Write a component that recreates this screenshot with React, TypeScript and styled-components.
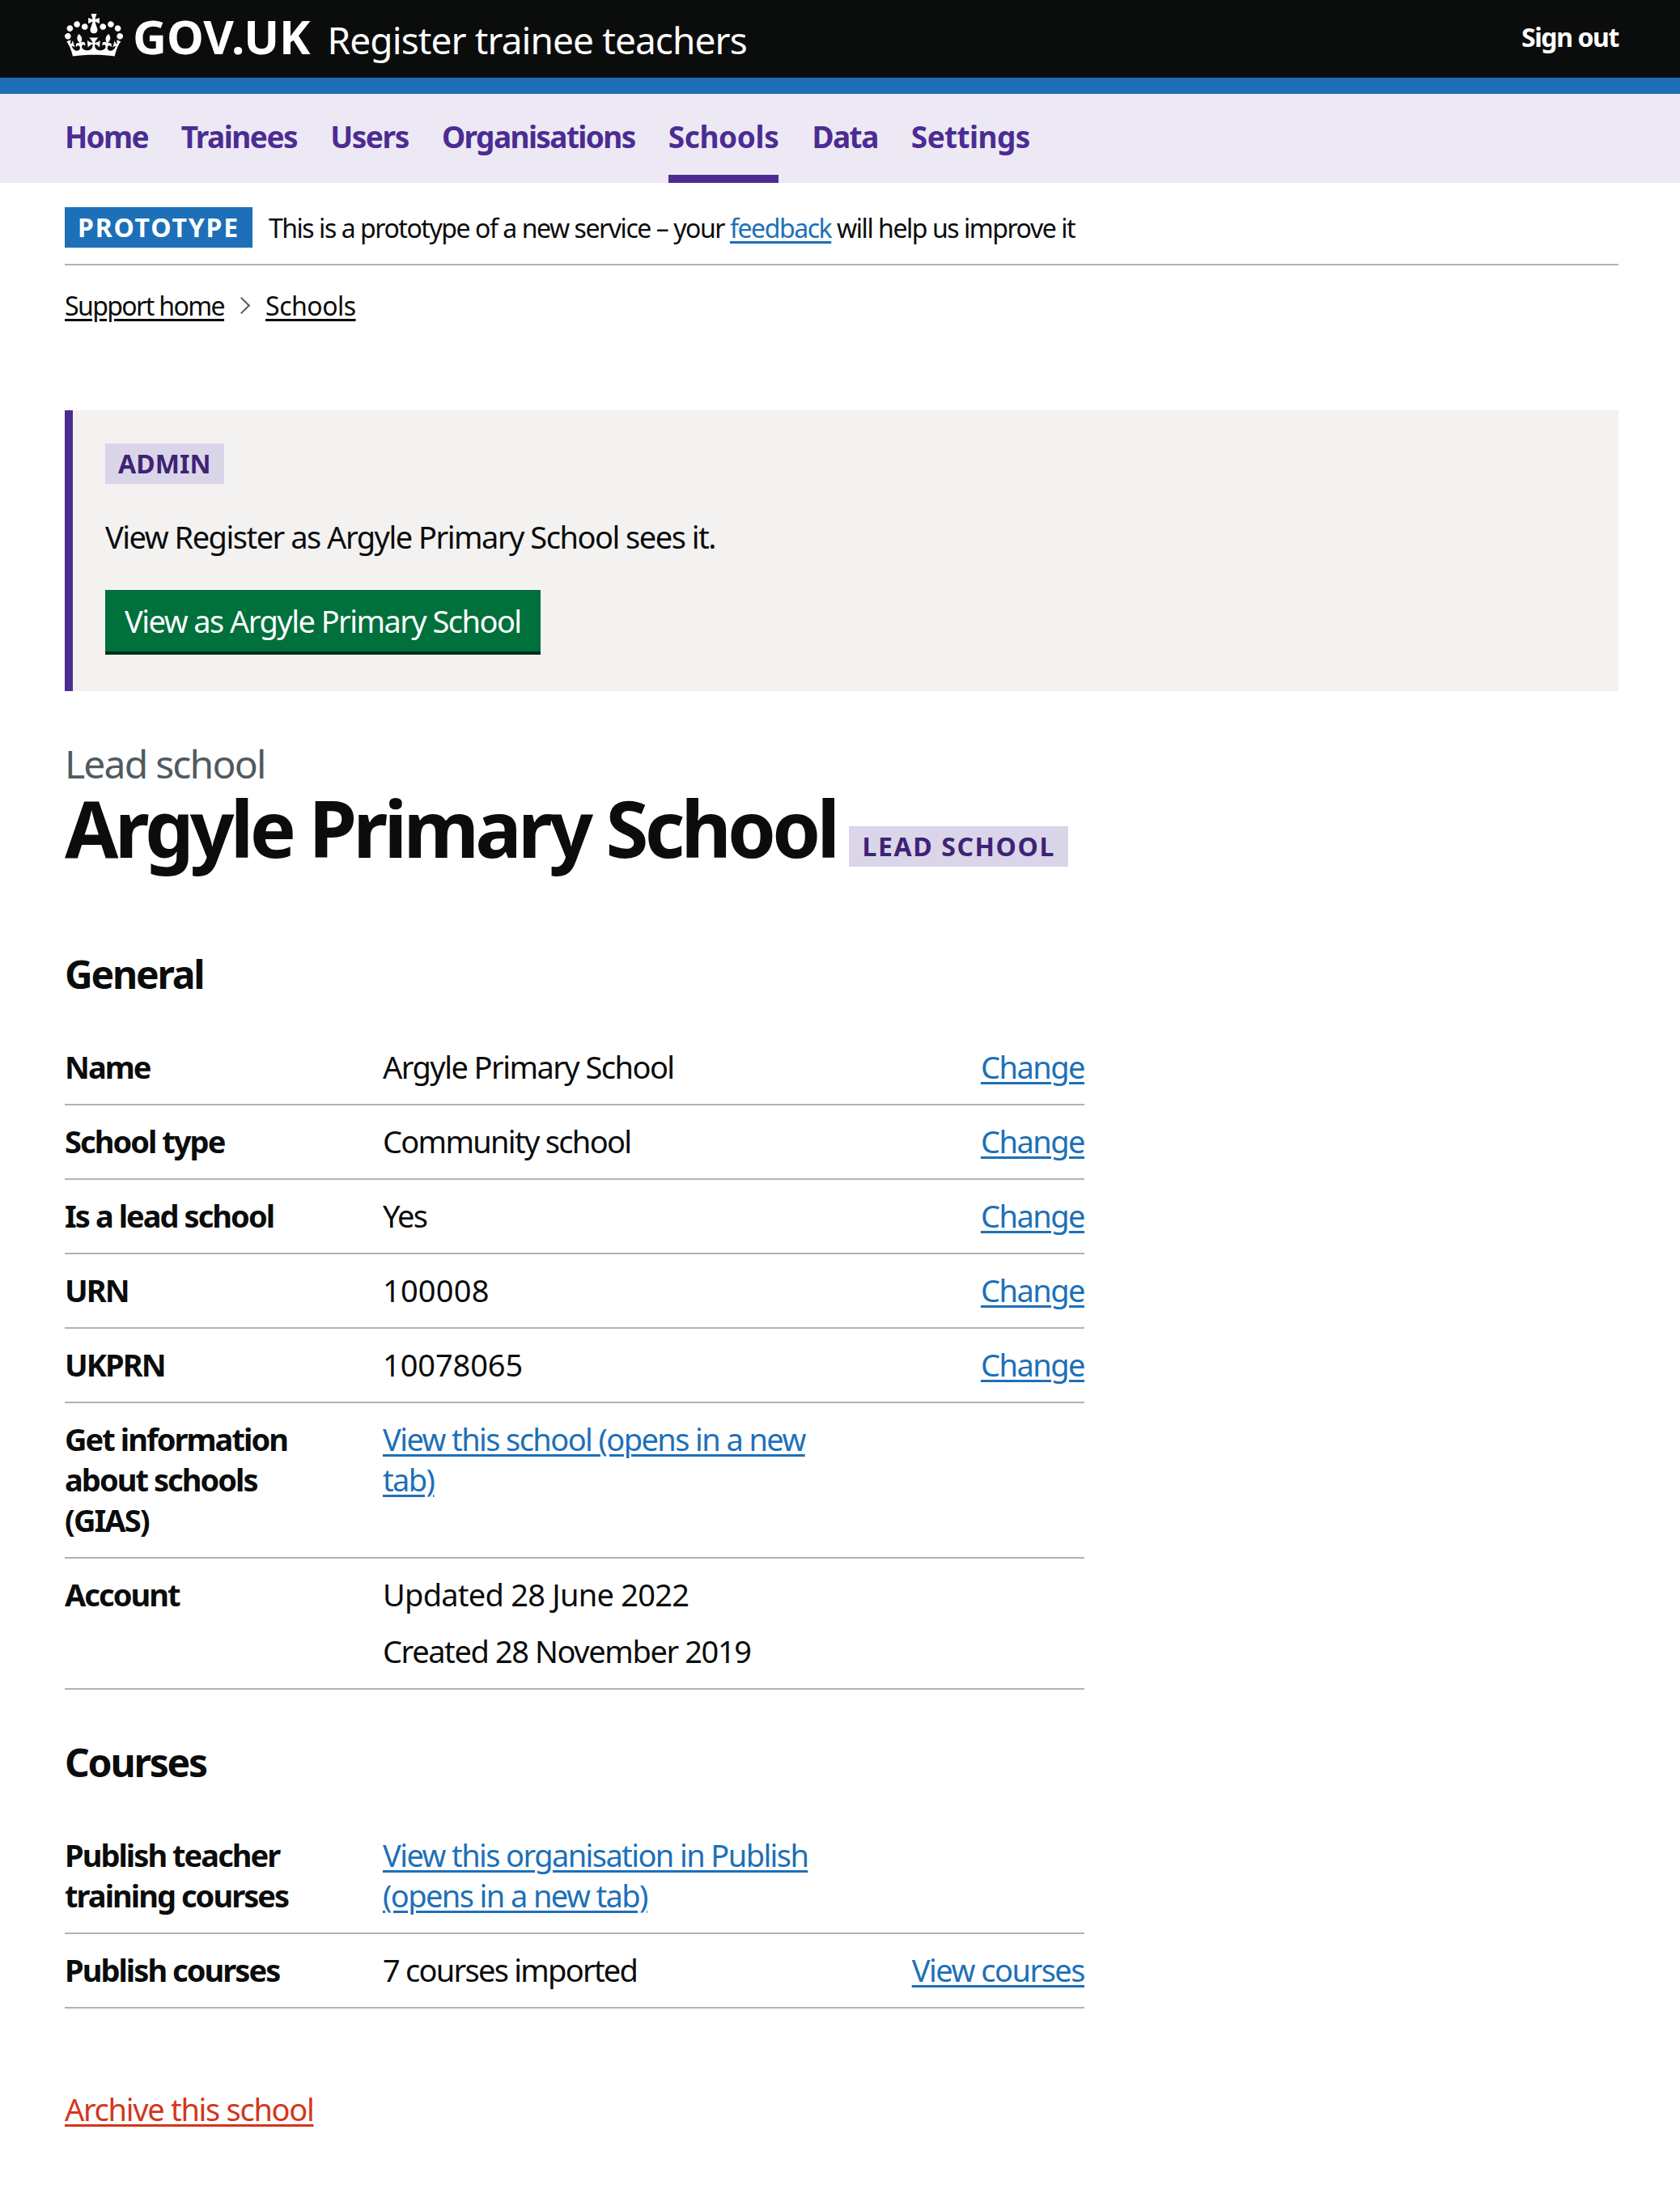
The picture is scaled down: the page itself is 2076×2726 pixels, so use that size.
import React from "react";
import styled, { createGlobalStyle } from "styled-components";

const FONT = `"Noto Sans", "Liberation Sans", Arial, sans-serif`;

const GlobalStyle = createGlobalStyle`
  html, body {
    margin: 0;
    padding: 0;
    background: #ffffff;
    color: #0b0c0c;
    font-family: ${FONT};
  }
`;

const Header = styled.header`
  height: 96px;
  background: #0b0c0c;
  color: #ffffff;
  padding: 0 76px 0 80px;
  display: flex;
  align-items: center;
  justify-content: space-between;
`;

const Brand = styled.div`
  display: flex;
  align-items: center;
`;

const Crown = styled.svg`
  width: 72px;
  height: 53px;
  margin-right: 12px;
  margin-top: -9px;
`;

const Logotype = styled.span`
  font-size: 58px;
  font-weight: 700;
  letter-spacing: 0;
  line-height: 60px;
  margin-top: -7px;
`;

const ServiceName = styled.span`
  font-size: 46px;
  line-height: 60px;
  letter-spacing: -0.9px;
  margin-left: 21px;
  margin-top: 2px;
`;

const SignOut = styled.a`
  font-size: 32px;
  font-weight: 700;
  letter-spacing: -1.4px;
  color: #ffffff;
  margin-top: -6px;
`;

const BlueBar = styled.div`
  height: 20px;
  background: #1d70b8;
`;

const Nav = styled.nav`
  height: 110px;
  background: #ece9f5;
  padding: 0 80px;
  display: flex;
  gap: 41px;
`;

const NavItem = styled.a<{ $active?: boolean; $tracking: number }>`
  display: flex;
  align-items: center;
  height: 96px;
  padding-top: 4px;
  font-size: 37px;
  font-weight: 700;
  letter-spacing: ${(p) => p.$tracking}px;
  color: #4c2c92;
  border-bottom: 10px solid ${(p) => (p.$active ? "#4c2c92" : "transparent")};
`;

const Main = styled.main`
  padding: 0 76px 0 80px;
`;

const Banner = styled.div`
  display: flex;
  align-items: center;
  gap: 20px;
  padding: 30px 0 20px;
  border-bottom: 2px solid #b1b4b6;
  font-size: 32px;
  letter-spacing: -1.45px;
`;

const Tag = styled.strong`
  display: inline-block;
  font-size: 32px;
  font-weight: 700;
  line-height: 34px;
  padding: 8px 16px;
  background: #dbd5e9;
  color: #3d2375;
  letter-spacing: 0.1px;
`;

const PrototypeTag = styled(Tag)`
  background: #1d70b8;
  color: #ffffff;
  letter-spacing: 1.8px;
`;

const InlineLink = styled.a`
  color: #1d70b8;
  text-decoration: underline;
  text-decoration-thickness: 3px;
  text-underline-offset: 4px;
`;

const Breadcrumbs = styled.div`
  display: flex;
  align-items: center;
  height: 40px;
  margin-top: 29px;
  margin-bottom: 1px;
  font-size: 32px;
`;

const Crumb = styled.a<{ $tracking: number }>`
  color: #0b0c0c;
  letter-spacing: ${(p) => p.$tracking}px;
  text-decoration: underline;
  text-decoration-thickness: 3px;
  text-underline-offset: 4px;
`;

const Chevron = styled.span`
  display: block;
  width: 13px;
  height: 13px;
  margin: 0 22px 0 14px;
  border-top: 2px solid #505a5f;
  border-right: 2px solid #505a5f;
  transform: rotate(45deg);
`;

const AdminPanel = styled.section`
  margin-top: 110px;
  height: 347px;
  box-sizing: border-box;
  border-left: 10px solid #4c2c92;
  background: #f3f2f1;
  padding: 41px 40px 0;
`;

const AdminText = styled.p`
  margin: 40px 0 41px;
  font-size: 38px;
  line-height: 50px;
  letter-spacing: -1.5px;
`;

const GreenButton = styled.a`
  display: inline-block;
  background: #00703c;
  color: #ffffff;
  font-size: 38px;
  line-height: 50px;
  letter-spacing: -1.55px;
  padding: 13px 24px 13px;
  box-shadow: 0 4px 0 #002d18;
`;

const Caption = styled.div`
  margin-top: 61px;
  font-size: 48px;
  line-height: 58px;
  letter-spacing: -1.8px;
  color: #505a5f;
`;

const Title = styled.h1`
  margin: 0 0 101px;
  font-size: 96px;
  line-height: 100px;
  font-weight: 700;
  letter-spacing: -4.75px;
`;

const TitleTag = styled(Tag)`
  margin-left: 16px;
  letter-spacing: 1.6px;
  vertical-align: 2px;
`;

const SectionHeading = styled.h2`
  margin: 0 0 40px;
  font-size: 48px;
  line-height: 60px;
  font-weight: 700;
  letter-spacing: -2.2px;
`;

const SummaryList = styled.dl`
  width: 1260px;
  margin: 0 0 60px;
  font-size: 38px;
  line-height: 50px;
  letter-spacing: -1.6px;
`;

const Row = styled.div`
  display: grid;
  grid-template-columns: 393px 1fr auto;
  padding: 19px 0 21px;
  border-bottom: 2px solid #b1b4b6;
`;

const Key = styled.dt`
  font-weight: 700;
  padding-right: 73px;
  letter-spacing: -1.95px;
`;

const Value = styled.dd`
  margin: 0;
  max-width: 540px;
`;

const ValueLine = styled.p<{ $tracking?: number }>`
  margin: 0 0 20px;
  white-space: nowrap;
  letter-spacing: ${(p) => (p.$tracking === undefined ? "inherit" : `${p.$tracking}px`)};

  &:last-child {
    margin-bottom: 0;
  }
`;

const Action = styled(InlineLink)`
  justify-self: end;
  letter-spacing: -1.5px;
`;

const DangerLink = styled(InlineLink)`
  display: inline-block;
  margin: 39px 0 97px;
  font-size: 38px;
  line-height: 50px;
  letter-spacing: -1.3px;
  color: #d4351c;
`;

type SummaryLine = { text: string; tracking?: number };

type SummaryRow = {
  label: string;
  value?: SummaryLine[];
  link?: string;
  action?: string;
};

const generalRows: SummaryRow[] = [
  { label: "Name", value: [{ text: "Argyle Primary School", tracking: -1.55 }], action: "Change" },
  { label: "School type", value: [{ text: "Community school", tracking: -1.7 }], action: "Change" },
  { label: "Is a lead school", value: [{ text: "Yes" }], action: "Change" },
  { label: "URN", value: [{ text: "100008", tracking: 0.2 }], action: "Change" },
  { label: "UKPRN", value: [{ text: "10078065", tracking: -0.1 }], action: "Change" },
  {
    label: "Get information about schools (GIAS)",
    link: "View this school (opens in a new tab)",
  },
  {
    label: "Account",
    value: [
      { text: "Updated 28 June 2022", tracking: -0.75 },
      { text: "Created 28 November 2019", tracking: -1.4 },
    ],
  },
];

const courseRows: SummaryRow[] = [
  {
    label: "Publish teacher training courses",
    link: "View this organisation in Publish (opens in a new tab)",
  },
  {
    label: "Publish courses",
    value: [{ text: "7 courses imported", tracking: -1.75 }],
    action: "View courses",
  },
];

const navItems = [
  { label: "Home", tracking: -1.7 },
  { label: "Trainees", tracking: -1.5 },
  { label: "Users", tracking: -1.4 },
  { label: "Organisations", tracking: -1.6 },
  { label: "Schools", tracking: -0.4 },
  { label: "Data", tracking: -1.5 },
  { label: "Settings", tracking: -0.6 },
];

const CrownLogo = () => (
  <Crown viewBox="0 0 132 97" aria-hidden="true">
    <path
      fill="currentColor"
      fillRule="evenodd"
      d="M25 30.2c3.5 1.5 7.7-.2 9.1-3.7 1.5-3.6-.2-7.8-3.9-9.2-3.6-1.4-7.6.3-9.1 3.9-1.4 3.5.3 7.5 3.9 9zM9 39.5c3.6 1.5 7.8-.2 9.2-3.7 1.5-3.6-.2-7.8-3.9-9.1-3.6-1.5-7.6.2-9.1 3.8-1.4 3.5.3 7.5 3.8 9zM4.4 57.2c3.5 1.5 7.7-.2 9.1-3.8 1.5-3.6-.2-7.7-3.9-9.1-3.5-1.5-7.6.3-9.1 3.8-1.4 3.5.3 7.6 3.9 9.1zm38.3-21.4c3.5 1.5 7.7-.2 9.1-3.8 1.5-3.6-.2-7.7-3.9-9.1-3.6-1.5-7.6.3-9.1 3.8-1.3 3.6.4 7.7 3.9 9.1zm64.4-5.6c-3.6 1.5-7.8-.2-9.1-3.7-1.5-3.6.2-7.8 3.8-9.2 3.6-1.4 7.7.3 9.2 3.9 1.3 3.5-.4 7.5-3.9 9zm15.9 9.3c-3.6 1.5-7.7-.2-9.1-3.7-1.5-3.6.2-7.8 3.7-9.1 3.6-1.5 7.7.2 9.2 3.8 1.5 3.5-.3 7.5-3.8 9zm4.7 17.7c-3.6 1.5-7.8-.2-9.2-3.8-1.5-3.6.2-7.7 3.9-9.1 3.6-1.5 7.7.3 9.2 3.8 1.3 3.5-.4 7.6-3.9 9.1zM89.3 35.8c-3.6 1.5-7.8-.2-9.2-3.8-1.4-3.6.2-7.7 3.9-9.1 3.6-1.5 7.7.3 9.2 3.8 1.4 3.6-.3 7.7-3.9 9.1zM69.7 17.7l8.9 4.7V9.3l-8.9 2.8c-.2-.3-.5-.6-.9-.9L72.4 0H59.6l3.5 11.2c-.3.3-.6.5-.9.9l-8.8-2.8v13.1l8.8-4.7c.3.3.6.7.9.9l-5 15.4v.1c-.2.8-.4 1.6-.4 2.4 0 4.1 3.1 7.5 7 8.1h.2c.3 0 .7.1 1 .1.4 0 .7 0 1-.1h.2c4-.6 7.1-4.1 7.1-8.1 0-.8-.1-1.7-.4-2.4V34l-5.1-15.4c.4-.2.7-.6 1-.9zM66 92.8c16.9 0 32.8 1.1 47.1 3.2 4-16.9 8.9-26.7 14-33.5l-9.6-3.4c1 4.9 1.1 7.2 0 10.2-1.5-1.4-3-4.3-4.2-8.7L108.6 76c2.8-2 5-3.2 7.5-3.3-4.4 9.4-10 11.9-13.6 11.2-4.3-.8-6.3-4.6-5.6-7.9 1-4.7 5.7-5.9 8-.5 4.3-8.7-3-11.4-7.6-8.8 7.1-7.2 7.9-13.5 2.1-21.1-8 6.1-8.1 12.3-4.5 20.8-4.7-5.4-12.1-2.5-9.5 6.2 3.4-5.2 7.9-2 7.2 3.1-.6 4.3-6.4 7.8-13.5 7.2-10.3-.9-10.9-8-11.2-13.8 2.5-.5 7.1 1.8 11 7.3L80.2 60c-4.1 4.4-8 5.3-12.3 5.4 1.4-4.4 8-11.6 8-11.6H55.5s6.4 7.2 7.9 11.6c-4.2-.1-8-1-12.3-5.4l1.4 16.4c3.9-5.5 8.5-7.7 10.9-7.3-.3 5.8-.9 12.8-11.1 13.8-7.2.6-12.9-2.9-13.5-7.2-.7-5 3.8-8.3 7.1-3.1 2.7-8.7-4.6-11.6-9.4-6.2 3.7-8.5 3.6-14.7-4.6-20.8-5.8 7.6-5 13.9 2.2 21.1-4.7-2.6-11.9.1-7.7 8.8 2.3-5.5 7.1-4.2 8.1.5.7 3.3-1.3 7.1-5.7 7.9-3.5.7-9-1.8-13.5-11.2 2.5.1 4.7 1.3 7.5 3.3l-4.7-15.4c-1.2 4.4-2.7 7.2-4.3 8.7-1.1-3-.9-5.3 0-10.2l-9.5 3.4c5 6.9 9.9 16.7 14 33.5 14.8-2.1 30.8-3.2 47.7-3.2z"
    />
  </Crown>
);

const SummaryRows = ({ rows }: { rows: SummaryRow[] }) => (
  <SummaryList>
    {rows.map((row) => (
      <Row key={row.label}>
        <Key>{row.label}</Key>
        <Value>
          {row.link ? <InlineLink href="#">{row.link}</InlineLink> : null}
          {row.value?.map((line) => (
            <ValueLine key={line.text} $tracking={line.tracking}>
              {line.text}
            </ValueLine>
          ))}
        </Value>
        {row.action ? <Action href="#">{row.action}</Action> : null}
      </Row>
    ))}
  </SummaryList>
);

export default function App() {
  return (
    <>
      <GlobalStyle />
      <Header>
        <Brand>
          <CrownLogo />
          <Logotype>GOV.UK</Logotype>
          <ServiceName>Register trainee teachers</ServiceName>
        </Brand>
        <SignOut>Sign out</SignOut>
      </Header>
      <BlueBar />
      <Nav>
        {navItems.map((item) => (
          <NavItem
            key={item.label}
            $active={item.label === "Schools"}
            $tracking={item.tracking}
          >
            {item.label}
          </NavItem>
        ))}
      </Nav>
      <Main>
        <Banner>
          <PrototypeTag>PROTOTYPE</PrototypeTag>
          <span>
            This is a prototype of a new service – your{" "}
            <InlineLink href="#">feedback</InlineLink> will help us improve it
          </span>
        </Banner>
        <Breadcrumbs>
          <Crumb href="#" $tracking={-1.6}>
            Support home
          </Crumb>
          <Chevron />
          <Crumb href="#" $tracking={-0.5}>
            Schools
          </Crumb>
        </Breadcrumbs>
        <AdminPanel>
          <Tag>ADMIN</Tag>
          <AdminText>View Register as Argyle Primary School sees it.</AdminText>
          <GreenButton>View as Argyle Primary School</GreenButton>
        </AdminPanel>
        <Caption>Lead school</Caption>
        <Title>
          Argyle Primary School
          <TitleTag>LEAD SCHOOL</TitleTag>
        </Title>
        <SectionHeading>General</SectionHeading>
        <SummaryRows rows={generalRows} />
        <SectionHeading>Courses</SectionHeading>
        <SummaryRows rows={courseRows} />
        <DangerLink href="#">Archive this school</DangerLink>
      </Main>
    </>
  );
}
